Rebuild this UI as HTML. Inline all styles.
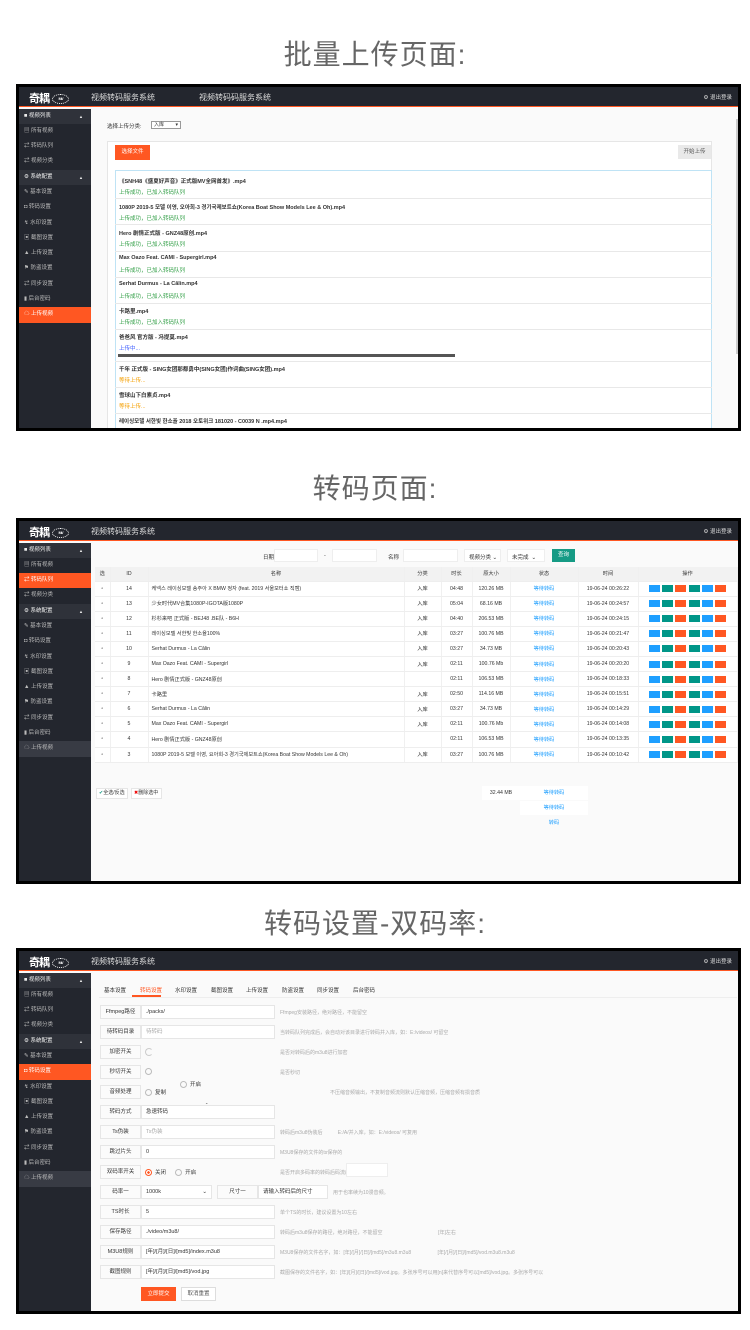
<!DOCTYPE html>
<html><head><meta charset="utf-8">
<style>
*{margin:0;padding:0;box-sizing:border-box}
body{width:750px;height:1330px;background:#fff;position:relative;overflow:hidden;font-family:"Liberation Sans","Noto Sans CJK SC",sans-serif;color:#333}
.title{position:absolute;left:0;width:750px;text-align:center;font-size:28px;color:#666;letter-spacing:1px}
.panel{position:absolute;left:16px;width:725px;background:#000;padding:3px}
.inner{position:relative;width:100%;height:100%;background:#fafafa;overflow:hidden}
.hdr{position:absolute;left:0;top:0;width:100%;height:20px;background:#23262e;border-bottom:1.5px solid #ff5722}
.logo{position:absolute;left:10px;top:3px;color:#fff;font-weight:bold;font-size:11px;letter-spacing:-1px}
.badge{display:inline-block;width:17px;height:10px;border:1.5px dotted #fff;border-radius:50%;vertical-align:middle;margin-left:3px;font-size:4px;text-align:center;line-height:7px}
.sys{position:absolute;top:5px;color:#ddd;font-size:8px}
.logout{position:absolute;right:6px;top:6px;color:#ddd;font-size:5.5px}
.side{position:absolute;left:0;top:21.5px;width:72px;bottom:0;background:#23262e}
.side div{height:15.3px;line-height:15.3px;font-size:5.5px;color:#bbb;padding-left:5px;position:relative}
.side .g{background:#2f323a;color:#eee}
.side .g:after{content:"▲";position:absolute;right:8px;font-size:4px}
.side .on{background:#ff5722;color:#fff}
.side .lt{background:#383b44}
.content{position:absolute;left:72px;top:21.5px;right:0;bottom:0}
.a{position:absolute;font-size:5.5px;white-space:nowrap}
.btn{position:absolute;font-size:5.5px;text-align:center;color:#fff}
table{border-collapse:collapse;table-layout:fixed;position:absolute}
td,th{font-size:5.2px;height:15.1px;border-bottom:1px solid #eee;border-right:1px solid #f0f0f0;text-align:center;white-space:nowrap;overflow:hidden;font-weight:normal;background:#fff}
th{background:#f2f2f2;height:14px}
td.n{text-align:left;padding-left:3px}
.op{display:inline-block;width:11px;height:7px;margin:0 1.2px;vertical-align:middle}
.lb{position:absolute;left:81px;width:41px;height:14px;border:1px solid #e6e6e6;background:#fbfbfb;font-size:5.5px;text-align:center;line-height:12px}
.ip{position:absolute;left:122px;width:134px;height:14px;border:1px solid #e6e6e6;background:#fff;font-size:5.5px;line-height:12px;padding-left:4px}
.hp{position:absolute;left:261px;font-size:5px;color:#aaa;white-space:nowrap}
.rd{display:inline-block;width:7px;height:7px;border:1px solid #bbb;border-radius:50%;vertical-align:middle;margin-right:3px}
</style></head><body>

<div class="title" style="top:33px">批量上传页面:</div>
<div class="title" style="top:467px">转码页面:</div>
<div class="title" style="top:902px">转码设置-双码率:</div>

<!-- PANEL 1 -->
<div class="panel" style="top:84px;height:347px"><div class="inner">
<div class="hdr"><div class="logo">奇耦<span class="badge">MV</span></div><div class="sys" style="left:72px">视频转码服务系统</div><div class="sys" style="left:180px">视频转码码服务系统</div><div class="logout">⚙ 退出登录</div></div>
<div class="side">
<div class="g">■ 视频列表</div><div>▤ 所有视频</div><div>⇄ 转码队列</div><div>⇄ 视频分类</div>
<div class="g">⚙ 系统配置</div><div>✎ 基本设置</div><div>◘ 转码设置</div><div>↯ 水印设置</div><div>▣ 截图设置</div><div>▲ 上传设置</div><div>⚑ 防盗设置</div><div>⇄ 同步设置</div><div>▮ 后台密码</div><div class="on">☁ 上传视频</div>
</div>
<div class="content">
<div class="a" style="left:16px;top:13px">选择上传分类:</div>
<div class="a" style="left:60px;top:12px;width:30px;height:8px;border:1px solid #999;background:#fff;font-size:5px;line-height:6px;padding-left:2px">入库 <span style="float:right;margin-right:2px">▾</span></div>
<div class="a" style="left:16px;top:32.5px;width:605px;height:300px;border:1px solid #e6e6e6;background:#fff"></div>
<div class="btn" style="left:24px;top:36.5px;width:35px;height:15px;line-height:15px;background:#ff5722">选择文件</div>
<div class="btn" style="left:587px;top:36.5px;width:33px;height:14px;line-height:14px;background:#e9e9e9;color:#555">开始上传</div>
<div class="a" style="left:24px;top:61.5px;width:597px;height:260px;border:1px solid #bfe3f5;background:#fff"></div>
<!-- entries: abs name ys -->
<div class="a" style="left:28px;top:68px;font-weight:bold">《SNH48《盛夏好声音》正式版MV全网首发》.mp4</div>
<div class="a" style="left:28px;top:79px;color:#2f9e44">上传成功，已加入转码队列</div>
<div class="a" style="left:24px;top:89.5px;width:597px;border-top:1px solid #e8e8e8"></div>
<div class="a" style="left:28px;top:94px;font-weight:bold">1080P 2019-5 모델 이영, 오아희-3 경기국제보트쇼(Korea Boat Show Models Lee &amp; Oh).mp4</div>
<div class="a" style="left:28px;top:105px;color:#2f9e44">上传成功，已加入转码队列</div>
<div class="a" style="left:24px;top:115.5px;width:597px;border-top:1px solid #e8e8e8"></div>
<div class="a" style="left:28px;top:120px;font-weight:bold">Hero 剧情正式版 - GNZ48原创.mp4</div>
<div class="a" style="left:28px;top:131px;color:#2f9e44">上传成功，已加入转码队列</div>
<div class="a" style="left:24px;top:142.5px;width:597px;border-top:1px solid #e8e8e8"></div>
<div class="a" style="left:28px;top:146px;font-weight:bold">Max Oazo Feat. CAMI - Supergirl.mp4</div>
<div class="a" style="left:28px;top:157px;color:#2f9e44">上传成功，已加入转码队列</div>
<div class="a" style="left:24px;top:168.5px;width:597px;border-top:1px solid #e8e8e8"></div>
<div class="a" style="left:28px;top:172px;font-weight:bold">Serhat Durmus - La Câlin.mp4</div>
<div class="a" style="left:28px;top:183px;color:#2f9e44">上传成功，已加入转码队列</div>
<div class="a" style="left:24px;top:194.5px;width:597px;border-top:1px solid #e8e8e8"></div>
<div class="a" style="left:28px;top:198px;font-weight:bold">卡路里.mp4</div>
<div class="a" style="left:28px;top:209px;color:#2f9e44">上传成功，已加入转码队列</div>
<div class="a" style="left:24px;top:220.5px;width:597px;border-top:1px solid #e8e8e8"></div>
<div class="a" style="left:28px;top:224px;font-weight:bold">爸爸风 官方版 - 冯提莫.mp4</div>
<div class="a" style="left:28px;top:235px;color:#3b5bff">上传中...</div>
<div class="a" style="left:27px;top:245px;width:337px;height:3px;background:#555"></div>
<div class="a" style="left:24px;top:252.5px;width:597px;border-top:1px solid #e8e8e8"></div>
<div class="a" style="left:28px;top:256px;font-weight:bold">千年 正式版 - SING女团那都勇中(SING女团)作词曲(SING女团).mp4</div>
<div class="a" style="left:28px;top:267px;color:#f59f00">等待上传...</div>
<div class="a" style="left:24px;top:278.5px;width:597px;border-top:1px solid #e8e8e8"></div>
<div class="a" style="left:28px;top:282px;font-weight:bold">雪球山下白素贞.mp4</div>
<div class="a" style="left:28px;top:293px;color:#f59f00">等待上传...</div>
<div class="a" style="left:24px;top:304.5px;width:597px;border-top:1px solid #e8e8e8"></div>
<div class="a" style="left:28px;top:308px;font-weight:bold">레이싱모델 서한빛 한소율 2018 오토위크 181020 - C0039 N .mp4.mp4</div>
<div class="a" style="left:645px;top:10px;width:3px;height:235px;background:#ccc"></div>
</div>
</div></div>

<!-- PANEL 2 -->
<div class="panel" style="top:518px;height:366px"><div class="inner">
<div class="hdr"><div class="logo">奇耦<span class="badge">MV</span></div><div class="sys" style="left:72px">视频转码服务系统</div><div class="logout">⚙ 退出登录</div></div>
<div class="side">
<div class="g">■ 视频列表</div><div>▤ 所有视频</div><div class="on">⇄ 转码队列</div><div>⇄ 视频分类</div>
<div class="g">⚙ 系统配置</div><div>✎ 基本设置</div><div>◘ 转码设置</div><div>↯ 水印设置</div><div>▣ 截图设置</div><div>▲ 上传设置</div><div>⚑ 防盗设置</div><div>⇄ 同步设置</div><div>▮ 后台密码</div><div class="lt">☁ 上传视频</div>
</div>
<div class="content">
<div class="a" style="left:172px;top:10px">日期</div>
<div class="a" style="left:183px;top:6px;width:44px;height:13px;border:1px solid #eee;background:#fff"></div>
<div class="a" style="left:233px;top:10px">-</div>
<div class="a" style="left:241px;top:6px;width:45px;height:13px;border:1px solid #eee;background:#fff"></div>
<div class="a" style="left:297px;top:10px">名称</div>
<div class="a" style="left:312px;top:6px;width:55px;height:13px;border:1px solid #eee;background:#fff"></div>
<div class="a" style="left:373px;top:6px;width:37px;height:13px;border:1px solid #eee;background:#fff;padding:3px 0 0 4px">视频分类 ⌄</div>
<div class="a" style="left:416px;top:6px;width:38px;height:13px;border:1px solid #eee;background:#fff;padding:3px 0 0 4px">未完成 &nbsp;⌄</div>
<div class="btn" style="left:461px;top:6px;width:23px;height:13px;line-height:13px;background:#169b85">查询</div>
<table style="left:4px;top:24.5px;width:642px">
<colgroup><col style="width:15px"><col style="width:38px"><col style="width:256px"><col style="width:37px"><col style="width:31px"><col style="width:38px"><col style="width:68px"><col style="width:60px"><col style="width:99px"></colgroup>
<tr><th>选</th><th>ID</th><th>名称</th><th>分类</th><th>时长</th><th>原大小</th><th>状态</th><th>时间</th><th>操作</th></tr>
<tr><td>▫</td><td>14</td><td class="n">케넥스 레이싱모델 송주아 X BMW 정자 (feat. 2019 서울모터쇼 직캠)</td><td>入库</td><td>04:48</td><td>120.26 MB</td><td style="color:#1e9fff">等待转码</td><td>19-06-24 00:26:22</td><td class="o"></td></tr>
<tr><td>▫</td><td>13</td><td class="n">少女时代MV合集1080P-IGOTA版1080P</td><td>入库</td><td>05:04</td><td>68.16 MB</td><td style="color:#1e9fff">等待转码</td><td>19-06-24 00:24:57</td><td class="o"></td></tr>
<tr><td>▫</td><td>12</td><td class="n">杉杉来吧 正式版 - BEJ48 .BE队 - B6H</td><td>入库</td><td>04:40</td><td>206.53 MB</td><td style="color:#1e9fff">等待转码</td><td>19-06-24 00:24:15</td><td class="o"></td></tr>
<tr><td>▫</td><td>11</td><td class="n">레이싱모델 서한빛 한소율100%</td><td>入库</td><td>03:27</td><td>100.76 MB</td><td style="color:#1e9fff">等待转码</td><td>19-06-24 00:21:47</td><td class="o"></td></tr>
<tr><td>▫</td><td>10</td><td class="n">Serhat Durmus - La Câlin</td><td>入库</td><td>03:27</td><td>34.73 MB</td><td style="color:#1e9fff">等待转码</td><td>19-06-24 00:20:43</td><td class="o"></td></tr>
<tr><td>▫</td><td>9</td><td class="n">Max Oazo Feat. CAMI - Supergirl</td><td>入库</td><td>02:11</td><td>100.76 Mb</td><td style="color:#1e9fff">等待转码</td><td>19-06-24 00:20:20</td><td class="o"></td></tr>
<tr><td>▫</td><td>8</td><td class="n">Hero 剧情正式版 - GNZ48原创</td><td></td><td>02:11</td><td>106.53 MB</td><td style="color:#1e9fff">等待转码</td><td>19-06-24 00:18:33</td><td class="o"></td></tr>
<tr><td>▫</td><td>7</td><td class="n">卡路里</td><td>入库</td><td>02:50</td><td>114.16 MB</td><td style="color:#1e9fff">等待转码</td><td>19-06-24 00:15:51</td><td class="o"></td></tr>
<tr><td>▫</td><td>6</td><td class="n">Serhat Durmus - La Câlin</td><td>入库</td><td>03:27</td><td>34.73 MB</td><td style="color:#1e9fff">等待转码</td><td>19-06-24 00:14:29</td><td class="o"></td></tr>
<tr><td>▫</td><td>5</td><td class="n">Max Oazo Feat. CAMI - Supergirl</td><td>入库</td><td>02:11</td><td>100.76 Mb</td><td style="color:#1e9fff">等待转码</td><td>19-06-24 00:14:08</td><td class="o"></td></tr>
<tr><td>▫</td><td>4</td><td class="n">Hero 剧情正式版 - GNZ48原创</td><td></td><td>02:11</td><td>106.53 MB</td><td style="color:#1e9fff">等待转码</td><td>19-06-24 00:13:35</td><td class="o"></td></tr>
<tr><td>▫</td><td>3</td><td class="n">1080P 2019-5 모델 이영, 요아희-3 경기국제보트쇼(Korea Boat Show Models Lee &amp; Oh)</td><td>入库</td><td>03:27</td><td>100.76 MB</td><td style="color:#1e9fff">等待转码</td><td>19-06-24 00:10:42</td><td class="o"></td></tr>
</table>
<div class="a" style="left:391px;top:243px;width:38px;height:14px;background:#fff;text-align:center;line-height:14px;font-size:5.2px">32.44 MB</div>
<div class="a" style="left:429px;top:243px;width:68px;height:14px;background:#fff;text-align:center;line-height:14px;font-size:5.2px;color:#1e9fff">等待转码</div>
<div class="a" style="left:429px;top:258px;width:68px;height:14px;background:#fff;text-align:center;line-height:14px;font-size:5.2px;color:#1e9fff">等待转码</div>
<div class="a" style="left:429px;top:273px;width:68px;height:14px;text-align:center;line-height:14px;font-size:5.2px;color:#1e9fff">转码</div>
<div class="a" style="left:5px;top:245px;width:32px;height:11px;border:1px solid #e6e6e6;background:#fff;line-height:9px;font-size:5px;padding-left:2px"><span style="color:#169b85">✔</span>全选/反选</div>
<div class="a" style="left:40px;top:245px;width:31px;height:11px;border:1px solid #e6e6e6;background:#fff;line-height:9px;font-size:5px;padding-left:2px"><span style="color:#e00">✖</span>删除选中</div>
</div>
</div></div>

<!-- PANEL 3 -->
<div class="panel" style="top:948px;height:366px"><div class="inner">
<div class="hdr"><div class="logo">奇耦<span class="badge">MV</span></div><div class="sys" style="left:72px">视频转码服务系统</div><div class="logout">⚙ 退出登录</div></div>
<div class="side">
<div class="g">■ 视频列表</div><div>▤ 所有视频</div><div>⇄ 转码队列</div><div>⇄ 视频分类</div>
<div class="g">⚙ 系统配置</div><div>✎ 基本设置</div><div class="on">◘ 转码设置</div><div>↯ 水印设置</div><div>▣ 截图设置</div><div>▲ 上传设置</div><div>⚑ 防盗设置</div><div>⇄ 同步设置</div><div>▮ 后台密码</div><div class="lt">☁ 上传视频</div>
</div>
<div class="content" style="">
<div class="a" style="left:8px;top:24px;width:638px;border-top:1px solid #eee"></div>
<div class="a" style="left:13px;top:13px">基本设置</div>
<div class="a" style="left:49px;top:13px;color:#ff5722">转码设置</div>
<div class="a" style="left:41px;top:22.5px;width:29px;height:2px;background:#ff5722"></div>
<div class="a" style="left:84px;top:13px">水印设置</div>
<div class="a" style="left:120px;top:13px">截图设置</div>
<div class="a" style="left:155px;top:13px">上传设置</div>
<div class="a" style="left:191px;top:13px">防盗设置</div>
<div class="a" style="left:226px;top:13px">同步设置</div>
<div class="a" style="left:262px;top:13px">后台密码</div>
</div>
<div style="position:absolute;left:-19px;top:-951px">
<!-- rows using abs coords; labels left 100 -->
<div class="lb" style="left:100px;top:1005px">Ffmpeg路径</div><div class="ip" style="left:141px;top:1005px">./packs/</div><div class="hp" style="left:280px;top:1009px">Ffmpeg安装路径，绝对路径，不能留空</div>
<div class="lb" style="left:100px;top:1025px">待转码目录</div><div class="ip" style="left:141px;top:1025px;color:#aaa">待转码</div><div class="hp" style="left:280px;top:1029px">当转码队列完成后，会自动对该目录进行转码并入库，如：E:/videos/ 可留空</div>
<div class="lb" style="left:100px;top:1045px">加密开关</div><div class="a" style="left:145px;top:1048px;width:8px;height:8px;border:1px solid #ccc;border-radius:50%;border-right-color:transparent"></div><div class="hp" style="left:280px;top:1049px">是否对转码后的m3u8进行加密</div>
<div class="lb" style="left:100px;top:1065px">秒切开关</div><div class="a" style="left:145px;top:1068px"><span class="rd"></span></div><div class="hp" style="left:280px;top:1069px">是否秒切</div>
<div class="lb" style="left:100px;top:1085px">音频处理</div><div class="a" style="left:145px;top:1088px"><span class="rd"></span>复制</div><div class="a" style="left:180px;top:1080px"><span class="rd"></span>开启</div><div class="hp" style="left:330px;top:1089px">不压缩音频输出，不复制音频流则默认压缩音频，压缩音频有损音质</div>
<div class="lb" style="left:100px;top:1105px">转码方式</div><div class="ip" style="left:141px;top:1105px">急速转码</div><div class="a" style="left:205px;top:1100px;font-size:4px">⌄</div>
<div class="lb" style="left:100px;top:1125px">Ts伪装</div><div class="ip" style="left:141px;top:1125px;color:#aaa">Ts伪装</div><div class="hp" style="left:280px;top:1129px">转码后m3u8伪装后 &nbsp; &nbsp; &nbsp; &nbsp; &nbsp; E:/A/并入库，如：E:/videos/ 可复用</div>
<div class="lb" style="left:100px;top:1145px">跳过片头</div><div class="ip" style="left:141px;top:1145px">0</div><div class="hp" style="left:280px;top:1149px">M3U8保存的文件的ts保存的</div>
<div class="lb" style="left:100px;top:1165px">双码率开关</div><div class="a" style="left:145px;top:1168px"><span class="rd" style="border-color:#ff5722;background:radial-gradient(#ff5722 35%,#fff 40%)"></span>关闭 &nbsp; &nbsp; &nbsp;<span class="rd"></span>开启</div><div class="hp" style="left:280px;top:1169px">是否开启多码率的转码后码流的尺寸</div><div class="a" style="left:346px;top:1163px;width:42px;height:14px;border:1px solid #eee;background:#fff"></div>
<div class="lb" style="left:100px;top:1185px">码率一</div><div class="ip" style="left:141px;top:1185px;width:71px">1000k<span style="float:right;margin-right:4px">⌄</span></div><div class="lb" style="left:217px;top:1185px">尺寸一</div><div class="ip" style="left:258px;top:1185px;width:70px">请输入转码后的尺寸</div><div class="hp" style="left:333px;top:1189px">用于也率续为10漫音频。</div>
<div class="lb" style="left:100px;top:1205px">TS时长</div><div class="ip" style="left:141px;top:1205px">5</div><div class="hp" style="left:280px;top:1209px">单个TS的时长，建议设置为10左右</div>
<div class="lb" style="left:100px;top:1225px">保存路径</div><div class="ip" style="left:141px;top:1225px">./video/m3u8/</div><div class="hp" style="left:280px;top:1229px">转码后m3u8保存的路径，绝对路径，不能留空 &nbsp; &nbsp; &nbsp; &nbsp; &nbsp; &nbsp; &nbsp; &nbsp; &nbsp; &nbsp; &nbsp; &nbsp; &nbsp; &nbsp; &nbsp; &nbsp; &nbsp; &nbsp; &nbsp; &nbsp;[年]左右</div>
<div class="lb" style="left:100px;top:1245px">M3U8规则</div><div class="ip" style="left:141px;top:1245px">[年]/[月]/[日]/[md5]/index.m3u8</div><div class="hp" style="left:280px;top:1249px">M3U8保存的文件名字，如：[年]/[月]/[日]/[md5]/m3u8.m3u8 &nbsp; &nbsp; &nbsp; &nbsp; &nbsp; &nbsp; &nbsp; &nbsp; &nbsp; [年]/[月]/[日]/[md5]/vod.m3u8.m3u8</div>
<div class="lb" style="left:100px;top:1265px">截图规则</div><div class="ip" style="left:141px;top:1265px">[年]/[月]/[日]/[md5]/vod.jpg</div><div class="hp" style="left:280px;top:1269px">截图保存的文件名字，如：[年]/[月]/[日]/[md5]/vod.jpg。多张序号可以用[n]来代替序号可以[md5]/vod.jpg。多张序号可以</div>
<div class="btn" style="left:141px;top:1287px;width:35px;height:14px;line-height:14px;background:#ff5722">立即提交</div>
<div class="btn" style="left:181px;top:1287px;width:35px;height:14px;line-height:12px;background:#fff;border:1px solid #ddd;color:#555">取消重置</div>
</div>
</div></div>

<script>
document.querySelectorAll('td.o').forEach(function(t){
 ['#1e9fff','#009688','#ff5722','#009688','#1e9fff','#ff5722'].forEach(function(c){var s=document.createElement('span');s.className='op';s.style.background=c;t.appendChild(s);});
});
</script>
</body></html>
